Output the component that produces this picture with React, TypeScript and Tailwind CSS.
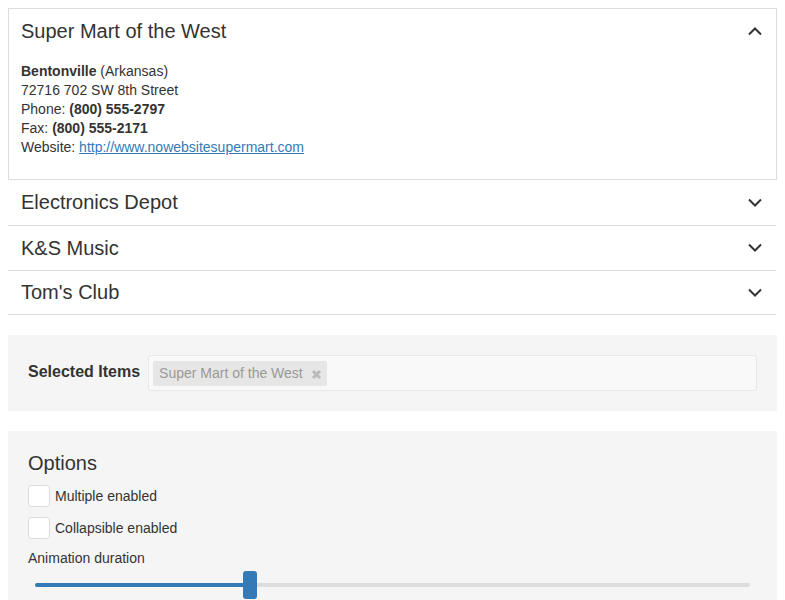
import React from 'react';

const stores = [
  { name: 'Electronics Depot', h: 'h-[46px]' },
  { name: 'K&S Music', h: 'h-[45px]' },
  { name: "Tom's Club", h: 'h-[44px]' },
];

const Chevron = ({ up }: { up?: boolean }) => (
  <svg width="16" height="10" viewBox="0 0 16 10" className="text-[#333]">
    <path
      d={up ? 'M2 8.5 L8 2.5 L14 8.5' : 'M2 1.5 L8 7.5 L14 1.5'}
      fill="none"
      stroke="currentColor"
      strokeWidth="2"
    />
  </svg>
);

export default function App() {
  return (
    <div className="min-h-[600px] bg-white p-[8px] text-[14px] leading-[19px] text-[#333]" style={{ fontFamily: '"Liberation Sans", Arial, sans-serif' }}>
      {/* accordion */}
      <div className="w-[769px]">
        <div className="border border-[#ddd]">
          <div className="flex h-[44px] items-center justify-between pl-[12px] pr-[13px]">
            <span className="text-[20px]">Super Mart of the West</span>
            <Chevron up />
          </div>
          <div className="pl-[12px] pt-[9px] pb-[22px]">
            <div>
              <b>Bentonville</b> (Arkansas)
            </div>
            <div>72716 702 SW 8th Street</div>
            <div>
              Phone: <b>(800) 555-2797</b>
            </div>
            <div>
              Fax: <b>(800) 555-2171</b>
            </div>
            <div>
              Website:{' '}
              <a href="#" className="text-[#337ab7] underline">
                http://www.nowebsitesupermart.com
              </a>
            </div>
          </div>
        </div>
        {stores.map((s) => (
          <div key={s.name} className={`flex ${s.h} w-[768px] items-center justify-between border-b border-[#ddd] pl-[13px] pr-[13px]`}>
            <span className="text-[20px]">{s.name}</span>
            <Chevron />
          </div>
        ))}
      </div>

      {/* selected items */}
      <div className="mt-[20px] flex w-[769px] items-start gap-[8px] bg-[#f5f5f5] p-[20px]">
        <span className="mt-[7px] text-[16px] font-bold">Selected Items</span>
        <div className="flex h-[36px] flex-1 items-center rounded-[3px] border border-[#e8e8e8] bg-[#f9f9f9] px-[4px]">
          <span className="flex h-[25px] items-center gap-[8px] rounded-[2px] bg-[#e6e6e6] pl-[6px] pr-[5px] text-[#999]">
            Super Mart of the West
            <svg width="11" height="11" viewBox="0 0 11 11" className="mt-[2px]">
              <path d="M2 2 L9 9 M9 2 L2 9" stroke="#bbb" strokeWidth="3" />
            </svg>
          </span>
        </div>
      </div>

      {/* options */}
      <div className="mt-[20px] w-[769px] bg-[#f5f5f5] px-[20px] pt-[20px] pb-[10px]">
        <div className="text-[20px] leading-[24px]">Options</div>
        <label className="mt-[10px] flex items-center gap-[5px]">
          <span className="h-[22px] w-[22px] rounded-[3px] border border-[#ddd] bg-white" />
          Multiple enabled
        </label>
        <label className="mt-[10px] flex items-center gap-[5px]">
          <span className="h-[22px] w-[22px] rounded-[3px] border border-[#ddd] bg-white" />
          Collapsible enabled
        </label>
        <div className="mt-[10px]">Animation duration</div>
        <div className="relative mx-[7px] mt-[3px] h-[28px]">
          <div className="absolute left-0 right-0 top-[12px] h-[4px] rounded-full bg-[#ddd]" />
          <div className="absolute left-0 top-[12px] h-[4px] w-[210px] rounded-l-full bg-[#337ab7]" />
          <div className="absolute left-[208px] top-0 h-[28px] w-[14px] rounded-[3px] bg-[#337ab7]" />
        </div>
      </div>
    </div>
  );
}
